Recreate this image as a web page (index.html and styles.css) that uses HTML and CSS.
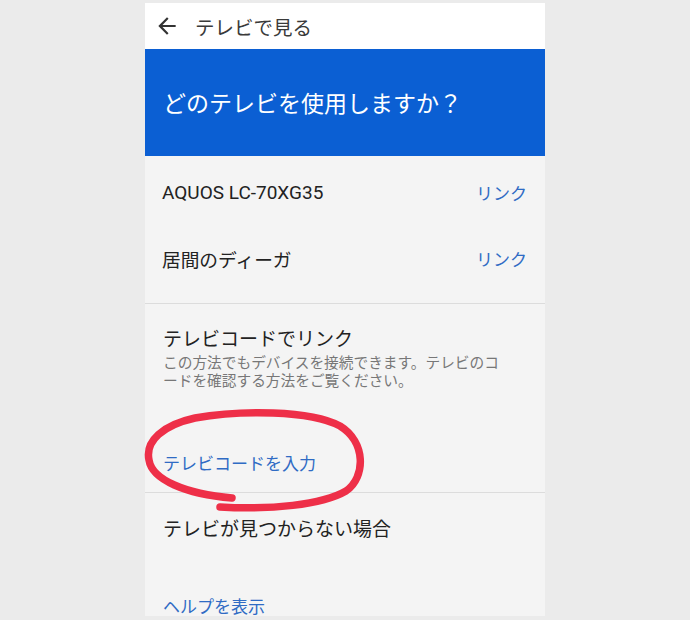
FILE: index.html
```html
<!DOCTYPE html>
<html lang="ja">
<head>
<meta charset="utf-8">
<title>テレビで見る</title>
<link rel="stylesheet" href="styles.css">
</head>
<body>
<div class="screen">
  <header class="appbar">
    <svg class="back" viewBox="0 0 24 24" width="26" height="26"><path d="M20 11H7.83l5.59-5.59L12 4l-8 8 8 8 1.41-1.41L7.83 13H20v-2z" fill="#333"/></svg>
    <span class="appbar-title">テレビで見る</span>
  </header>
  <section class="hero">
    <h1 class="hero-title">どのテレビを使用しますか？</h1>
  </section>
  <div class="devices">
    <div class="device-row">
      <span class="device-name">AQUOS LC-70XG35</span>
      <span class="link">リンク</span>
    </div>
    <div class="device-row">
      <span class="device-name cjk">居間のディーガ</span>
      <span class="link">リンク</span>
    </div>
  </div>
  <div class="section section-code">
    <div class="section-title">テレビコードでリンク</div>
    <div class="section-desc">この方法でもデバイスを接続できます。テレビのコ<br>ードを確認する方法をご覧ください。</div>
    <div class="section-link code-link">テレビコードを入力</div>
  </div>
  <div class="section section-help">
    <div class="section-title">テレビが見つからない場合</div>
    <div class="section-link help-link">ヘルプを表示</div>
  </div>
</div>
<svg class="marker" width="690" height="620" viewBox="0 0 690 620">
  <path d="M220 507 C 270 510, 322 505, 346 491 C 366 477, 366 442, 340 426 C 310 410, 240 410, 195 418 C 163 425, 145 441, 149 460 C 152 480, 186 494, 232 498" fill="none" stroke="#ee2f48" stroke-width="7.5" stroke-linecap="round"/>
</svg>
</body>
</html>
```
FILE: styles.css
```css
html, body {
  margin: 0;
  padding: 0;
}
body {
  background: #ebebeb;
  width: 690px;
  height: 620px;
  overflow: hidden;
  position: relative;
  font-family: Roboto, "Noto Sans CJK JP", sans-serif;
}
.screen {
  margin: 3px 0 0 145px;
  width: 400px;
  height: 613px;
  background: #f4f4f4;
  overflow: hidden;
}
.appbar {
  height: 46px;
  background: #ffffff;
  display: flex;
  align-items: center;
}
.back {
  margin-left: 9px;
  display: block;
}
.appbar-title {
  margin-left: 15px;
  font-size: 19.5px;
  color: #3a3a3a;
  font-family: "Noto Sans CJK JP", sans-serif;
}
.hero {
  height: 107px;
  background: #0b5fd3;
  display: flex;
  align-items: center;
  padding-left: 18px;
}
.hero-title {
  margin: 0;
  font-weight: normal;
  font-size: 23px;
  color: #ffffff;
  font-family: "Noto Sans CJK JP", sans-serif;
  padding-bottom: 2px;
}
.devices {
  padding: 3px 0 12px;
  border-bottom: 1px solid #dcdcdc;
}
.device-row {
  height: 66px;
  display: flex;
  align-items: center;
  justify-content: space-between;
  padding: 0 18px 0 17px;
  font-size: 19px;
}
.device-name {
  color: #222222;
}
.device-name.cjk {
  font-family: "Noto Sans CJK JP", sans-serif;
  font-size: 18.7px;
}
.link {
  color: #2f6bc4;
  font-family: "Noto Sans CJK JP", sans-serif;
  font-size: 17px;
}
.section {
  padding: 0 18px;
}
.section-code {
  padding-top: 21px;
  padding-bottom: 17px;
  border-bottom: 1px solid #dcdcdc;
}
.section-help {
  padding-top: 22px;
}
.section-title {
  font-family: "Noto Sans CJK JP", sans-serif;
  font-size: 19px;
  line-height: 26px;
  color: #222222;
}
.section-desc {
  margin-top: 2px;
  font-family: "Noto Sans CJK JP", sans-serif;
  font-size: 14.7px;
  line-height: 18px;
  color: #777777;
}
.section-link {
  font-family: "Noto Sans CJK JP", sans-serif;
  font-size: 17px;
  line-height: 24px;
  color: #2f6bc4;
}
.code-link {
  margin-top: 62px;
}
.help-link {
  margin-top: 53px;
}
.marker {
  position: absolute;
  left: 0;
  top: 0;
  pointer-events: none;
}
```
